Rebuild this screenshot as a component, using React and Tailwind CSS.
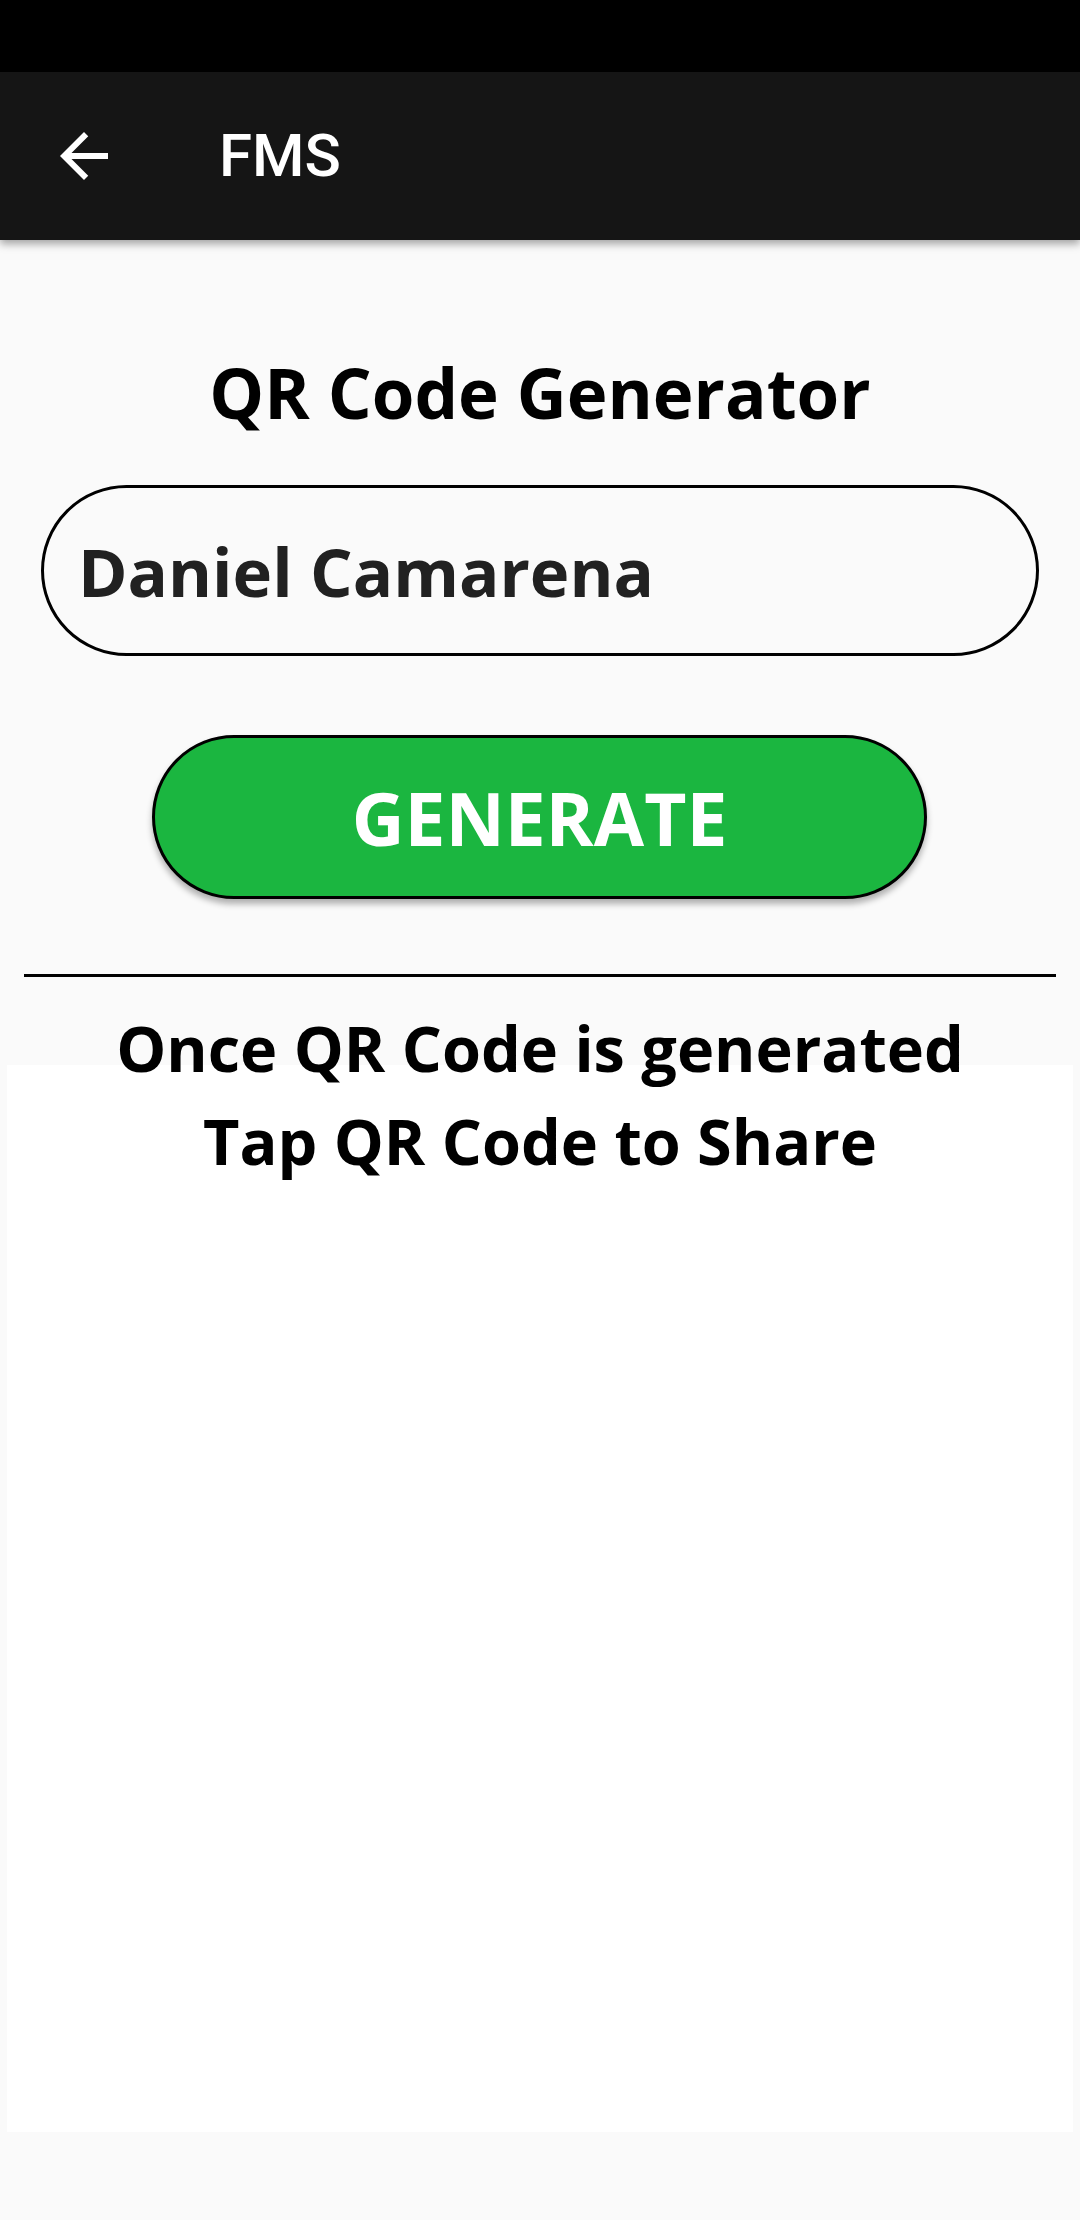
import React, { useState } from "react";

export default function App() {
  const [name, setName] = useState("Daniel Camarena");

  return (
    <div className="min-h-screen bg-[#fafafa] font-['Open_Sans',sans-serif]">
      {/* status bar */}
      <div className="h-[72px] bg-black" />

      {/* app bar */}
      <header className="relative z-10 h-[168px] bg-[#151515] flex items-center shadow-[0_4px_8px_rgba(0,0,0,0.35)]">
        <button className="ml-[48px] w-[72px] h-[72px] flex items-center justify-center">
          <svg viewBox="0 0 24 24" className="w-[72px] h-[72px]" fill="#ffffff">
            <path d="M20 11H7.83l5.59-5.59L12 4l-8 8 8 8 1.41-1.41L7.83 13H20v-2z" />
          </svg>
        </button>
        <span className="ml-[99px] text-white text-[60px] font-medium font-['Roboto',sans-serif] leading-none">
          FMS
        </span>
      </header>

      <main className="flex flex-col">
        <h1 className="mt-[118px] text-center text-[69px] font-bold leading-none text-black">
          QR Code Generator
        </h1>

        {/* name input */}
        <div className="mt-[58px] mx-[41px] h-[171px] rounded-full border-[3px] border-black flex items-center pl-[34px] pr-[34px]">
          <input
            type="text"
            value={name}
            onChange={(e) => setName(e.target.value)}
            className="w-full bg-transparent outline-none text-[67px] font-bold text-[#212121] leading-none"
          />
        </div>

        <button className="mt-[79px] ml-[152px] mr-[153px] h-[164px] rounded-full border-[3px] border-black bg-[#1bb640] text-white text-[73px] font-bold leading-none shadow-[0_5px_6px_rgba(0,0,0,0.3)]">
          GENERATE
        </button>

        {/* divider */}
        <div className="mt-[75px] mx-[24px] h-[3px] bg-black" />

        <p className="relative z-10 mt-[24px] text-center text-[63px] font-bold leading-[93px] text-black">
          Once QR Code is generated
          <br />
          Tap QR Code to Share
        </p>

        {/* qr code area */}
        <div className="-mt-[122px] mx-[7px] h-[1067px] bg-white" />
      </main>
    </div>
  );
}
